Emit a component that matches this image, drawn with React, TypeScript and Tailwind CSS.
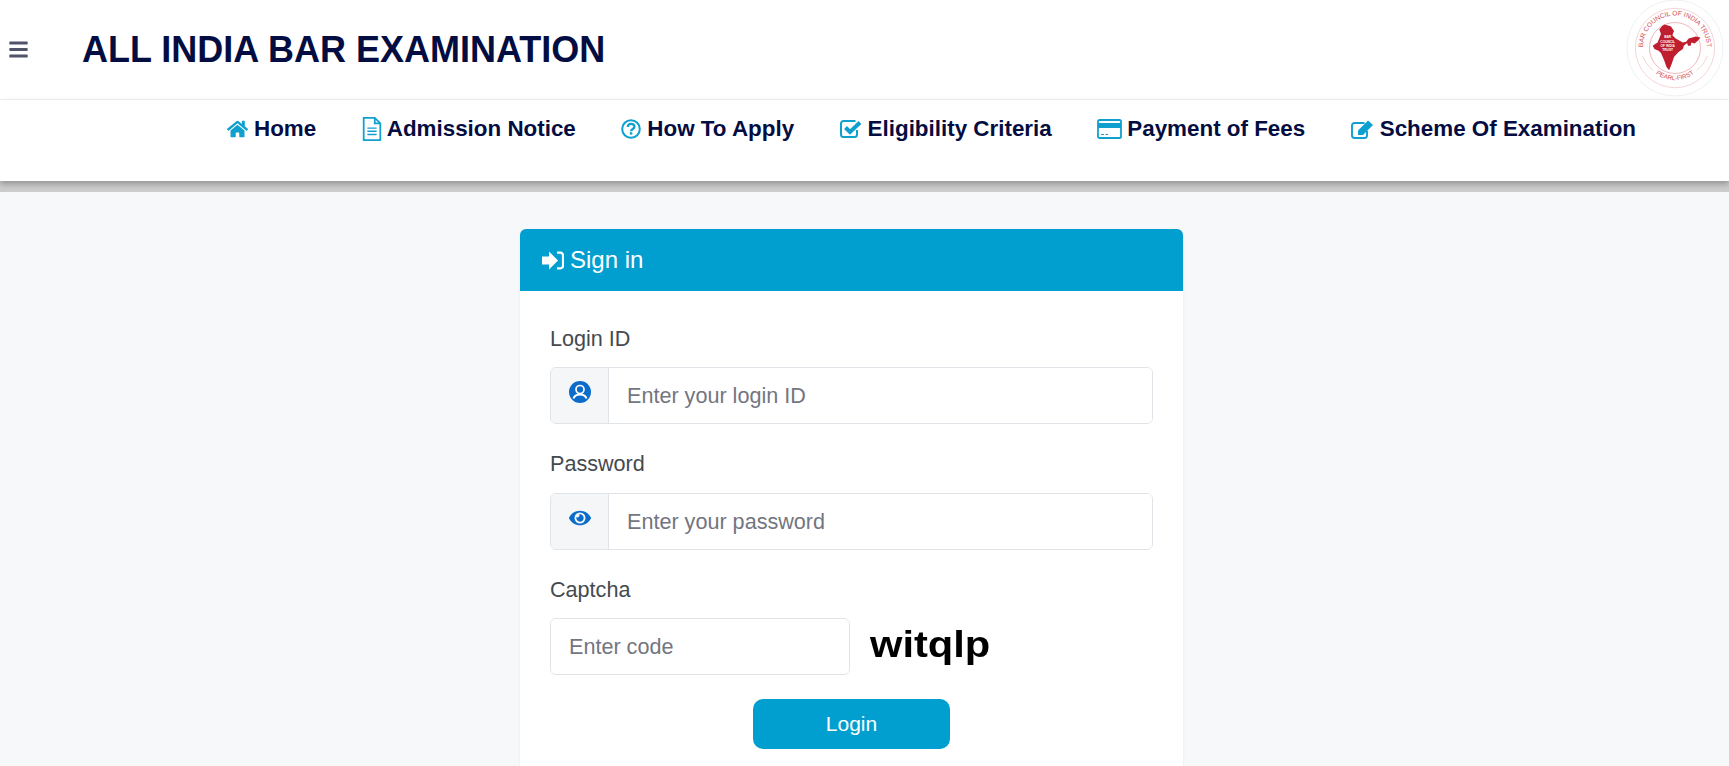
import { FaHome, FaEye, FaBars } from "react-icons/fa";

const font = "font-['Liberation_Sans',Arial,sans-serif]";

function FileIcon() {
  return (
    <svg viewBox="0 0 20 26" className="h-[24px] w-[20px]" fill="none" stroke="currentColor" strokeWidth="1.9">
      <path d="M1 1h12l6 6v18H1z" />
      <path d="M13 1v6h6" />
      <path d="M5 12h10M5 15.5h10M5 19h10" strokeWidth="1.5" />
    </svg>
  );
}

function QuestionIcon() {
  return (
    <svg viewBox="0 0 20 20" className="h-[20px] w-[20px]" fill="none" stroke="currentColor">
      <circle cx="10" cy="10" r="8.8" strokeWidth="2" />
      <path d="M6.8 8c0-4.2 6.6-4.2 6.6-.3 0 2.2-3.3 2.3-3.3 4.6" strokeWidth="2.3" />
      <path d="M10.1 13.2v2.4" strokeWidth="2.5" />
    </svg>
  );
}

function CheckIcon() {
  return (
    <svg viewBox="0 0 22 18" className="h-[18px] w-[22px]" fill="none" stroke="currentColor">
      <path d="M17 10v4.500a2.500 2.500 0 0 1-2.500 2.500h-11A2.500 2.500 0 0 1 1 14.500v-11A2.500 2.500 0 0 1 3.500 1h12" strokeWidth="2" />
      <path d="M5.500 7.500l4.500 4.500 10-9.500" strokeWidth="4" />
    </svg>
  );
}

function CardIcon() {
  return (
    <svg viewBox="0 0 25 20" className="h-[20px] w-[25px]" fill="none" stroke="currentColor">
      <rect x="1" y="1" width="23" height="18" rx="1.600" strokeWidth="1.800" />
      <path d="M1 4h23v5H1z" fill="currentColor" stroke="none" />
      <path d="M4 15.500h3M8.500 15.500h2.500" strokeWidth="1.200" />
    </svg>
  );
}

function EditIcon() {
  return (
    <svg viewBox="0 0 23 19" className="h-[19px] w-[23px]" fill="none" stroke="currentColor">
      <path d="M16 11v4.500a2.500 2.500 0 0 1-2.500 2.500h-10A2.500 2.500 0 0 1 1 15.500v-10A2.500 2.500 0 0 1 3.500 3h10" strokeWidth="1.900" />
      <path d="M7 10.500 17 .5l5 4.500-10 10H7z" fill="currentColor" stroke="none" />
    </svg>
  );
}

function SignInIcon() {
  return (
    <svg viewBox="0 0 22 18" className="h-[19px] w-[22px]" fill="none" stroke="currentColor">
      <path d="M0 5h7V0l9 9-9 9v-5H0z" fill="currentColor" stroke="none" />
      <path d="M15 1.200h3.500a2.500 2.500 0 0 1 2.500 2.500v10.600a2.500 2.500 0 0 1-2.500 2.500H15" strokeWidth="2.200" />
    </svg>
  );
}

function UserIcon() {
  return (
    <svg viewBox="0 0 22 22" className="h-[22px] w-[22px]">
      <circle cx="11" cy="11" r="11" fill="currentColor" />
      <circle cx="11" cy="8.500" r="4" fill="currentColor" stroke="#fff" strokeWidth="1.700" />
      <path d="M4.500 17.500c1-3 3.500-4 6.500-4s5.500 1 6.500 4" fill="none" stroke="#fff" strokeWidth="1.900" />
    </svg>
  );
}

function Logo() {
  return (
    <svg viewBox="0 0 100 100" className="h-[98px] w-[98px]" fill="none">
      <defs>
        <path id="topArc" d="M18 55A32.500 32.500 0 1 1 82 55" />
        <path id="bottomArc" d="M24 70A33 33 0 0 0 76 70" />
      </defs>
      <circle cx="50" cy="50" r="49" stroke="#edf0f3" />
      <circle cx="50" cy="50" r="40.500" stroke="#e8a8ae" strokeWidth="0.500" />
      <circle cx="50" cy="50" r="26" stroke="#dc6c76" strokeWidth="0.500" />
      <text fontFamily="Liberation Sans" fontSize="6.800" fill="#cf4d59">
        <textPath href="#topArc" startOffset="50%" textAnchor="middle">BAR COUNCIL OF INDIA TRUST</textPath>
      </text>
      <text fontFamily="Liberation Sans" fontSize="6.400" fill="#cf4d59">
        <textPath href="#bottomArc" startOffset="50%" textAnchor="middle">PEARL-FIRST</textPath>
      </text>
      <path d="M17 58a34 34 0 0 0 11 15M83 58a34 34 0 0 1-11 15" stroke="#e8a8ae" strokeWidth="0.500" />
      <path
        d="M39 26L45.700 27.700L49 32.700L47.300 37L50.700 40.300L58 44.300L61.300 43.700L64 40.300L71.300 38.300L76 39.300L73.300 42.700L70 45.300L66.700 44.300L66 47.700L63.300 47.700L62.300 45L59 47.700L58 51L53.300 54.300L49 59.300L46.700 66L44 72.700L41.300 69.300L39 62.700L35.700 55L33.300 52.700L29 51L27.300 47.700L29.700 46L32.300 44.300L35.700 35.700L34 31L36.700 27.700Z"
        fill="#bf1e2e"
      />
      <text fontFamily="Liberation Sans" fontSize="3.300" fontWeight="700" fill="#fff" textAnchor="middle">
        <tspan x="42.500" y="40">BAR</tspan>
        <tspan x="42.500" y="44.500">COUNCIL</tspan>
        <tspan x="42.500" y="49">OF INDIA</tspan>
        <tspan x="42.500" y="53.500">TRUST</tspan>
      </text>
    </svg>
  );
}

const navItems = [
  { icon: <FaHome className="h-[20px] w-[21px]" />, label: "Home", gap: "gap-[6px]" },
  { icon: <FileIcon />, label: "Admission Notice", gap: "gap-[5px]" },
  { icon: <QuestionIcon />, label: "How To Apply", gap: "gap-[6px]" },
  { icon: <CheckIcon />, label: "Eligibility Criteria", gap: "gap-[6px]" },
  { icon: <CardIcon />, label: "Payment of Fees", gap: "gap-[5px]" },
  { icon: <EditIcon />, label: "Scheme Of Examination", gap: "gap-[6px]" },
];

const inputClass =
  "h-full min-w-0 flex-1 bg-white pl-[18px] text-[21.600px] text-[#444a50] outline-none placeholder:text-[#73757f]";

export default function App() {
  return (
    <div className={`h-[766px] overflow-hidden bg-[#f6f8fa] ${font}`}>
      <header className="flex h-[100px] items-start justify-between border-b border-[#f4f5f6] bg-white pr-[5px]">
        <div className="flex h-[99px] items-center">
          <FaBars className="ml-[8px] h-[21px] w-[21px] text-[#4f5468]" />
          <h1 className="ml-[53px] text-[36px] font-bold text-[#040d42]">ALL INDIA BAR EXAMINATION</h1>
        </div>
        <div className="-mt-px">
          <Logo />
        </div>
      </header>

      <nav className="relative z-10 flex h-[81px] items-start gap-[45.500px] bg-white pl-[227px] pt-[15px] shadow-[0_3px_6px_rgba(0,0,0,0.28)]">
        {navItems.map((item) => (
          <a key={item.label} href="#" className={`flex h-[28px] items-center ${item.gap}`}>
            <span className="text-[#0fa0cf]">{item.icon}</span>
            <span className="text-[22.400px] font-bold text-[#040d42]">{item.label}</span>
          </a>
        ))}
      </nav>
      <div className="h-[11px] bg-[#cccccc]" />

      <main className="pl-[520px] pt-[37px]">
        <div className="h-[600px] w-[663px] rounded-[6px] bg-white shadow-[0_1px_3px_rgba(0,0,0,0.06)]">
          <div className="flex h-[62px] items-center gap-[6px] rounded-t-[6px] bg-[#019fd0] pl-[22px] text-[24px] text-white">
            <SignInIcon />
            Sign in
          </div>
          <form className="px-[30px] pt-[33px]">
            <label className="block h-[30px] text-[21.600px] leading-[30px] text-[#444a50]">Login ID</label>
            <div className="mt-[13px] flex h-[57px] overflow-hidden rounded-[6px] border border-[#e0e3e7]">
              <span className="flex w-[58px] justify-center border-r border-[#e0e3e7] bg-[#f4f6f8] pt-[13px] text-[#0b6ccb]">
                <UserIcon />
              </span>
              <input className={inputClass} placeholder="Enter your login ID" />
            </div>

            <label className="mt-[25px] block h-[30px] text-[21.600px] leading-[30px] text-[#444a50]">Password</label>
            <div className="mt-[14px] flex h-[57px] overflow-hidden rounded-[6px] border border-[#e0e3e7]">
              <span className="flex w-[58px] justify-center border-r border-[#e0e3e7] bg-[#f4f6f8] pt-[13px] text-[#0b6ccb]">
                <FaEye className="h-[22px] w-[22px]" />
              </span>
              <input className={inputClass} placeholder="Enter your password" />
            </div>

            <label className="mt-[25px] block h-[30px] text-[21.600px] leading-[30px] text-[#444a50]">Captcha</label>
            <div className="mt-[13px] flex h-[57px] items-center gap-[20px]">
              <div className="flex h-full w-[300px] overflow-hidden rounded-[6px] border border-[#e0e3e7]">
                <input className={inputClass} placeholder="Enter code" />
              </div>
              <span className="-mt-[3px] origin-left scale-x-[1.157] text-[36px] font-bold text-black blur-[0.6px]">witqlp</span>
            </div>

            <div className="mt-[24px] flex justify-center">
              <button
                type="button"
                className="h-[50px] w-[197px] rounded-[10px] bg-[#019fd0] text-[21px] text-white"
              >
                Login
              </button>
            </div>
          </form>
        </div>
      </main>
    </div>
  );
}
